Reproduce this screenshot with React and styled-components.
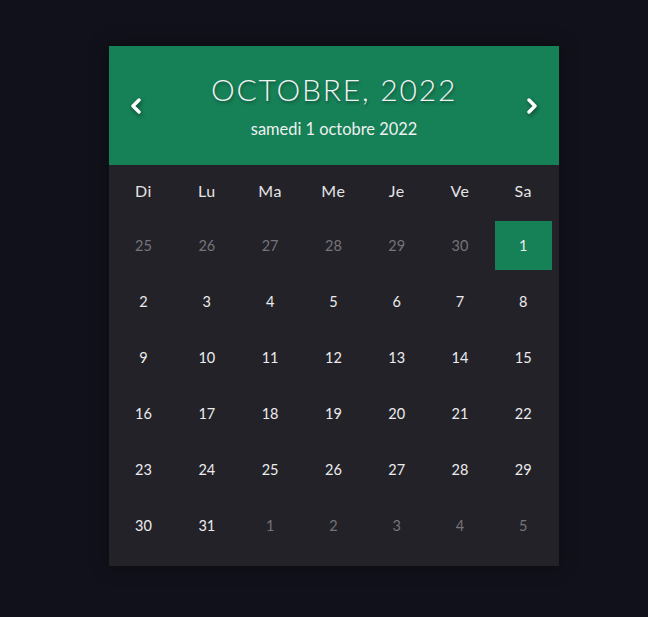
import styled, { createGlobalStyle } from "styled-components"

const GlobalStyle = createGlobalStyle`
  html, body {
    margin: 0;
    padding: 0;
    background: #11111b;
    font-family: "Lato", "Noto Sans", sans-serif;
  }
`

const weekDays = ["Di", "Lu", "Ma", "Me", "Je", "Ve", "Sa"]

function buildDays() {
    const days = []
    for (let d = 25; d <= 30; d++) days.push({ n: d, muted: true })
    for (let d = 1; d <= 31; d++) days.push({ n: d, active: d === 1 })
    for (let d = 1; d <= 5; d++) days.push({ n: d, muted: true })
    return days
}

export default function App() {
    const days = buildDays()

    return (
        <Page>
            <GlobalStyle />
            <Calendar>
                <Header>
                    <Arrow aria-label="mois précédent">
                        <svg width="14" height="16" viewBox="0 0 14 16">
                            <path d="M10 2 L4 8 L10 14" fill="none" stroke="#fff" strokeWidth="3.4" strokeLinecap="round" strokeLinejoin="round" />
                        </svg>
                    </Arrow>
                    <Titles>
                        <Month>OCTOBRE, 2022</Month>
                        <Today>samedi 1 octobre 2022</Today>
                    </Titles>
                    <Arrow aria-label="mois suivant">
                        <svg width="14" height="16" viewBox="0 0 14 16">
                            <path d="M4 2 L10 8 L4 14" fill="none" stroke="#fff" strokeWidth="3.4" strokeLinecap="round" strokeLinejoin="round" />
                        </svg>
                    </Arrow>
                </Header>
                <Grid>
                    {weekDays.map(w => <WeekDay key={w}>{w}</WeekDay>)}
                    {days.map((d, i) => (
                        <Day key={i} $muted={d.muted} $active={d.active}>{d.n}</Day>
                    ))}
                </Grid>
            </Calendar>
        </Page>
    )
}

const Page = styled.div`
min-height: 617px;
padding-top: 46px;
box-sizing: border-box;
padding-left: 109px;
`

const Calendar = styled.div`
width: 450px;
background: #232228;
box-shadow: 0 0 18px rgba(0, 0, 0, 0.35);
`

const Header = styled.header`
height: 119px;
background: #168057;
display: flex;
align-items: center;
justify-content: space-between;
padding: 0 19px 0 19px;
box-sizing: border-box;
`

const Arrow = styled.button`
background: none;
border: none;
padding: 0;
width: 16px;
display: flex;
justify-content: center;
cursor: pointer;
filter: drop-shadow(1px 2px 2px rgba(0, 0, 0, 0.45));
`

const Titles = styled.div`
display: flex;
flex-direction: column;
align-items: center;
color: #f2f2f2;
margin-top: -2px;
`

const Month = styled.h1`
margin: 0;
font-weight: 300;
font-size: 30px;
letter-spacing: 1.8px;
line-height: 36px;
text-shadow: 1px 2px 3px rgba(0, 0, 0, 0.35);
`

const Today = styled.p`
margin: 12px 0 0;
font-size: 16.4px;
font-weight: 400;
color: #f0f0f0;
`

const Grid = styled.div`
display: grid;
grid-template-columns: repeat(7, 57px);
grid-template-rows: 47px repeat(6, 49px);
column-gap: 6.3px;
row-gap: 7px;
padding: 2px 7px 16px 6px;
`

const WeekDay = styled.div`
display: flex;
align-items: center;
justify-content: center;
color: #e4e4e6;
font-size: 16px;
letter-spacing: 0.5px;
`

const Day = styled.div`
display: flex;
align-items: center;
justify-content: center;
font-size: 14.5px;
color: ${p => (p.$muted ? "#75747a" : "#ececee")};
background: ${p => (p.$active ? "#168057" : "transparent")};
`
